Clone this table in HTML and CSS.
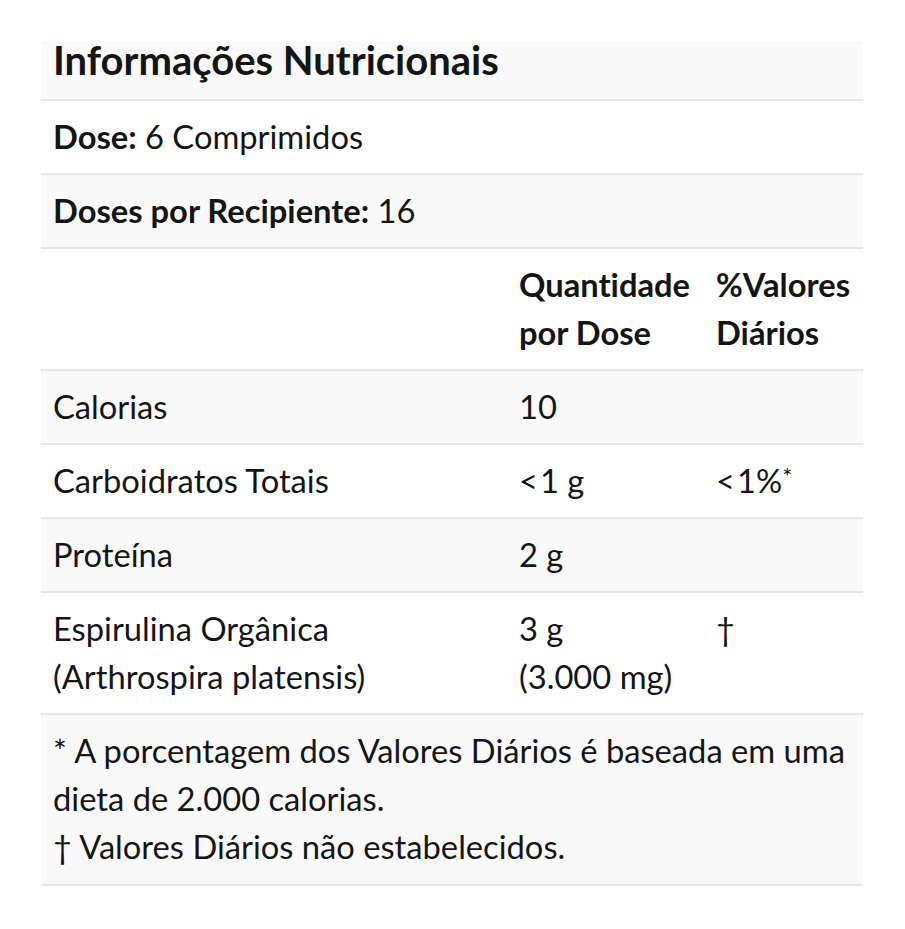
FILE: index.html
```html
<!DOCTYPE html>
<html lang="pt">
<head>
<meta charset="utf-8">
<link rel="stylesheet" href="styles.css">
</head>
<body>
<div class="facts">
  <div class="row title-row shade"><h2 class="title">Informações Nutricionais</h2></div>
  <div class="row full"><span class="cell"><b>Dose:</b> 6 Comprimidos</span></div>
  <div class="row full shade"><span class="cell"><b>Doses por Recipiente:</b> 16</span></div>
  <div class="row grid head">
    <span class="cell"></span>
    <span class="cell">Quantidade por Dose</span>
    <span class="cell">%Valores Diários</span>
  </div>
  <div class="row grid shade">
    <span class="cell">Calorias</span>
    <span class="cell">10</span>
    <span class="cell"></span>
  </div>
  <div class="row grid">
    <span class="cell">Carboidratos Totais</span>
    <span class="cell">&lt;&#8202;1 g</span>
    <span class="cell">&lt;&#8202;1%<sup>*</sup></span>
  </div>
  <div class="row grid shade">
    <span class="cell">Proteína</span>
    <span class="cell">2 g</span>
    <span class="cell"></span>
  </div>
  <div class="row grid">
    <span class="cell">Espirulina Orgânica<br>(Arthrospira platensis)</span>
    <span class="cell">3 g<br>(3.000 mg)</span>
    <span class="cell">†</span>
  </div>
  <div class="row full shade note">
    <span class="cell">* A porcentagem dos Valores Diários é baseada em uma dieta de 2.000 calorias.<br>† Valores Diários não estabelecidos.</span>
  </div>
</div>
</body>
</html>
```

FILE: styles.css
```css
* { box-sizing: border-box; }
html, body { background: #ffffff; }
body {
  margin: 0;
  padding: 41px 42px 0 41px;
  font-family: Lato, "Open Sans", sans-serif;
  color: #151515;
  font-size: 32.7px;
  line-height: 48px;
  font-variant-ligatures: none;
}
.facts {
  width: 822px;
}
.row {
  border-bottom: 2px solid #e6e6e6;
}
.shade { background: #f9f9f9; }
.title-row {
  height: 60px;
  padding: 0 12px;
}
.title {
  margin: 0;
  font-size: 40px;
  font-weight: 700;
  line-height: 38px;
}
.full .cell {
  display: block;
  padding: 12px 12px;
}
.grid {
  display: grid;
  grid-template-columns: 466px 197px 1fr;
}
.grid .cell {
  padding: 12px 12px;
}
.head .cell { font-weight: 700; }
.note .cell { padding: 12px 12px 13px; }
sup {
  font-size: 24px;
  line-height: 0;
  vertical-align: 8px;
}
b { font-weight: 700; }
```
